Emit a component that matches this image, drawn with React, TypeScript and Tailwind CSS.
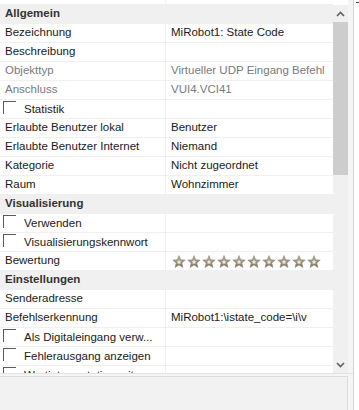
import React from 'react';

type Row =
  | { kind: 'header'; label: string }
  | { kind: 'prop'; label: string; value?: string; muted?: boolean; stars?: boolean }
  | { kind: 'check'; label: string };

const rows: Row[] = [
  { kind: 'header', label: 'Allgemein' },
  { kind: 'prop', label: 'Bezeichnung', value: 'MiRobot1: State Code' },
  { kind: 'prop', label: 'Beschreibung' },
  { kind: 'prop', label: 'Objekttyp', value: 'Virtueller UDP Eingang Befehl', muted: true },
  { kind: 'prop', label: 'Anschluss', value: 'VUI4.VCI41', muted: true },
  { kind: 'check', label: 'Statistik' },
  { kind: 'prop', label: 'Erlaubte Benutzer lokal', value: 'Benutzer' },
  { kind: 'prop', label: 'Erlaubte Benutzer Internet', value: 'Niemand' },
  { kind: 'prop', label: 'Kategorie', value: 'Nicht zugeordnet' },
  { kind: 'prop', label: 'Raum', value: 'Wohnzimmer' },
  { kind: 'header', label: 'Visualisierung' },
  { kind: 'check', label: 'Verwenden' },
  { kind: 'check', label: 'Visualisierungskennwort' },
  { kind: 'prop', label: 'Bewertung', stars: true },
  { kind: 'header', label: 'Einstellungen' },
  { kind: 'prop', label: 'Senderadresse' },
  { kind: 'prop', label: 'Befehlserkennung', value: 'MiRobot1:\\istate_code=\\i\\v' },
  { kind: 'check', label: 'Als Digitaleingang verw...' },
  { kind: 'check', label: 'Fehlerausgang anzeigen' },
  { kind: 'check', label: 'Wertinterpretation mit' },
];

function Star() {
  return (
    <svg width="14" height="13" viewBox="0 0 24 23">
      <defs>
        <linearGradient id="sg" x1="0" y1="0" x2="0" y2="1">
          <stop offset="0" stopColor="#b9b29c" />
          <stop offset="1" stopColor="#7d7562" />
        </linearGradient>
      </defs>
      <path
        d="M12 1 L15 8.5 L23 9 L17 14.2 L19 22 L12 17.8 L5 22 L7 14.2 L1 9 L9 8.5 Z"
        fill="url(#sg)"
        stroke="#8c8570"
        strokeWidth="1"
        strokeLinejoin="round"
      />
      <path d="M12 8 L13.3 11 L16.5 11.3 L14 13.4 L14.8 16.5 L12 14.8 L9.2 16.5 L10 13.4 L7.5 11.3 L10.7 11 Z" fill="#eeebe2" />
    </svg>
  );
}

function Checkbox() {
  return <div className="w-[13px] h-[13px] border-t border-l border-[#5a5a5a] shrink-0" />;
}

function GridRow({ row }: { row: Row }) {
  if (row.kind === 'header') {
    return (
      <div className="h-[19px] flex items-center bg-[#f0f0f0] border-b border-[#f0f0f0] pl-[5px] font-bold text-[#333333]">
        {row.label}
      </div>
    );
  }
  if (row.kind === 'check') {
    return (
      <div className="h-[19px] flex border-b border-[#f0f0f0]">
        <div className="w-[166px] shrink-0 flex items-start pt-[1px] pl-[3px] gap-[8px] border-r border-[#f0f0f0] text-[#1a1a1a] whitespace-nowrap overflow-hidden">
          <Checkbox />
          <span className="leading-[17px]">{row.label}</span>
        </div>
        <div className="flex-1" />
      </div>
    );
  }
  const color = row.muted ? 'text-[#7a7a7a]' : 'text-[#1a1a1a]';
  return (
    <div className="h-[19px] flex border-b border-[#f0f0f0]">
      <div className={`w-[166px] shrink-0 flex items-center pl-[5px] border-r border-[#f0f0f0] whitespace-nowrap ${color}`}>
        {row.label}
      </div>
      <div className={`flex-1 flex items-center pl-[5px] whitespace-nowrap overflow-hidden ${color}`}>
        {row.stars ? (
          <div className="flex gap-[1px] pl-[1px]">
            {Array.from({ length: 10 }).map((_, i) => (
              <Star key={i} />
            ))}
          </div>
        ) : (
          row.value
        )}
      </div>
    </div>
  );
}

export default function App() {
  return (
    <div className="w-[359px] h-[410px] bg-white flex overflow-hidden font-['Segoe_UI','Liberation_Sans',sans-serif] text-[11.5px]">
      <div className="w-[353px] flex flex-col bg-[#f5f5f5]">
        <div className="h-[373px] flex shrink-0">
          <div className="w-[333px] bg-white overflow-hidden">
            <div className="h-[5px] flex border-b border-[#f0f0f0]">
              <div className="w-[166px] border-r border-[#f0f0f0]" />
            </div>
            {rows.map((r, i) => (
              <GridRow key={i} row={r} />
            ))}
          </div>
          <div className="w-[15px] flex flex-col bg-white">
            <div className="h-[5px]" />
            <div className="flex-1 flex flex-col bg-[#f0f0f0]">
              <div className="h-[17px] flex items-center justify-center">
                <svg width="9" height="6" viewBox="0 0 9 6">
                  <path d="M1 5 L4.5 1.5 L8 5" fill="none" stroke="#606060" strokeWidth="1.6" />
                </svg>
              </div>
              <div className="h-[153px] mx-[0px] bg-[#cdcdcd]" />
              <div className="flex-1" />
              <div className="h-[17px] flex items-center justify-center">
                <svg width="9" height="6" viewBox="0 0 9 6">
                  <path d="M1 1 L4.5 4.5 L8 1" fill="none" stroke="#606060" strokeWidth="1.6" />
                </svg>
              </div>
            </div>
          </div>
          <div className="flex-1 bg-[#f5f5f5]" />
        </div>
        <div className="flex-1 border-t border-[#e3e3e3] pt-[2px] flex">
          <div className="w-[348px] border-t border-r border-[#dcdcdc] bg-[#f2f2f2]" />
        </div>
      </div>
      <div className="w-[1px] bg-[#d4d4d4]" />
      <div className="flex-1 bg-white relative">
        <div className="absolute left-[2px] top-[2px] w-[3px] h-[1px] bg-[#444444]" />
      </div>
    </div>
  );
}
